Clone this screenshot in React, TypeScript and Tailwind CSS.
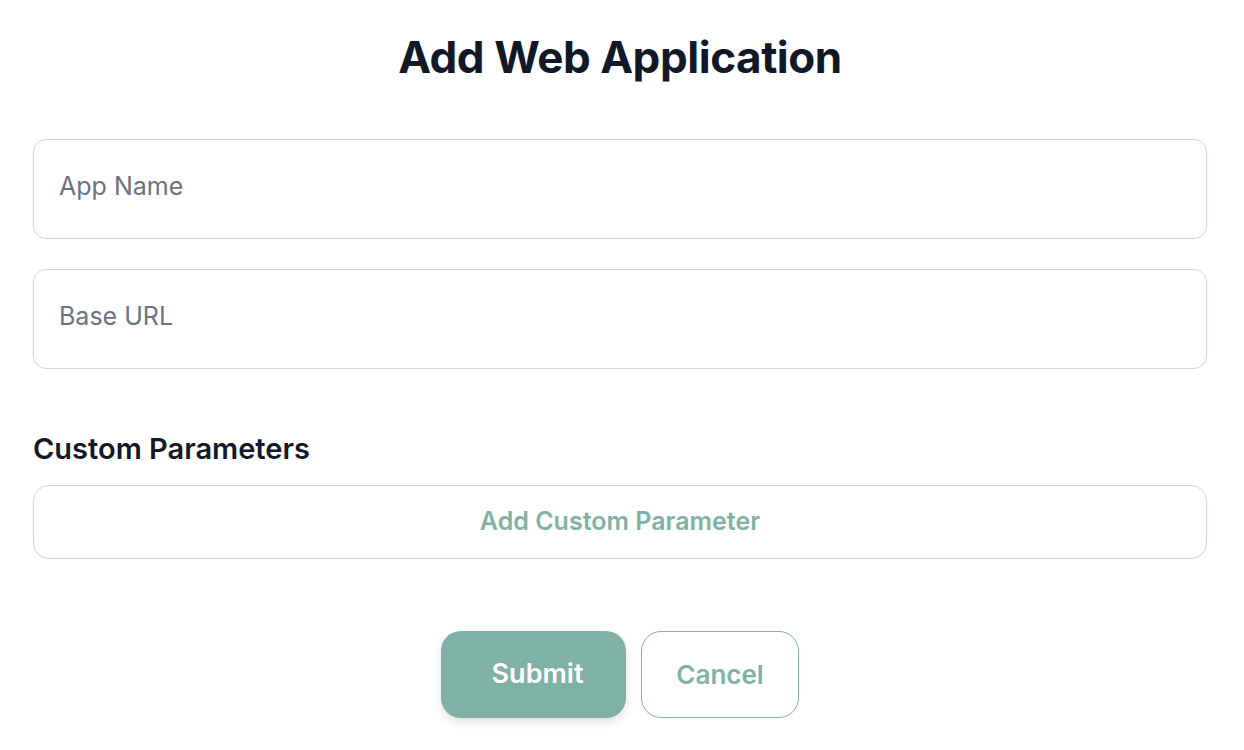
export default function App() {
  return (
    <div className="min-h-screen w-full bg-white font-['Inter',sans-serif]">
      <div className="pl-[33px] pr-[37px] pt-[30px] pb-8 w-full">
        <h1 className="text-center text-[44px] leading-[54px] font-bold tracking-[-0.01em] text-[#111827]">
          Add Web Application
        </h1>

        {/* Fields */}
        <div className="mt-[55px] flex flex-col gap-[30px]">
          <input
            placeholder="App Name"
            className="h-[100px] w-full rounded-[13px] border border-[#d1d5db] px-[25px] pb-[6px] text-[25px] text-[#111827] placeholder:text-[#6b7280] outline-none"
          />
          <input
            placeholder="Base URL"
            className="h-[100px] w-full rounded-[13px] border border-[#d1d5db] px-[25px] pb-[6px] text-[25px] text-[#111827] placeholder:text-[#6b7280] outline-none"
          />
        </div>

        <h2 className="mt-[63px] text-[29px] leading-[34px] font-semibold text-[#111827]">
          Custom Parameters
        </h2>
        <button className="mt-[19px] h-[74px] w-full rounded-[16px] border border-[#d1d5db] text-[25px] font-semibold text-[#7fb2a5]">
          Add Custom Parameter
        </button>

        <div className="mt-[72px] flex justify-center gap-[15px]">
          <button className="h-[87px] w-[185px] rounded-[20px] bg-[#7fb1a4] pl-[8px] text-[27px] font-semibold text-white shadow-[0_4px_10px_rgba(0,0,0,0.12)]">
            Submit
          </button>
          <button className="h-[87px] w-[158px] rounded-[20px] border border-[#7fb1a4] bg-white text-[26px] font-semibold text-[#7fb1a4]">
            Cancel
          </button>
        </div>
      </div>
    </div>
  );
}
